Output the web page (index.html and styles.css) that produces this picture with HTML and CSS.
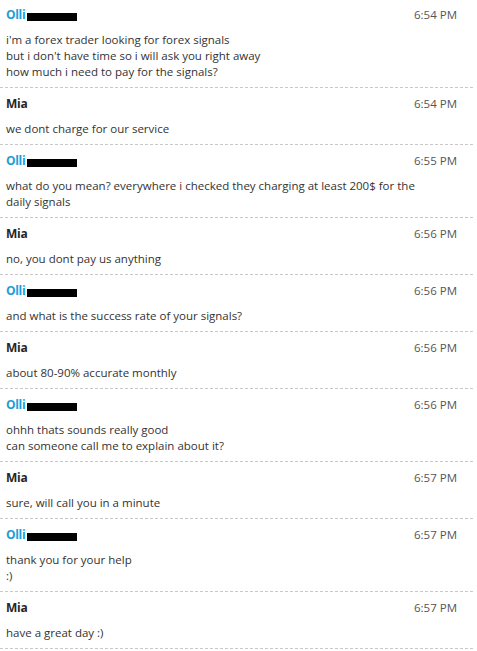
FILE: index.html
```html
<!DOCTYPE html>
<html>
<head>
<meta charset="utf-8">
<link rel="stylesheet" href="styles.css">
</head>
<body>
<div class="chat">
  <div class="msg">
    <div class="head"><span class="name olli">Olli <span class="redact"></span></span><span class="time">6:54 PM</span></div>
    <div class="text">i'm a forex trader looking for forex signals<br>but i don't have time so i will ask you right away<br>how much i need to pay for the signals?</div>
  </div>
  <div class="msg">
    <div class="head"><span class="name">Mia</span><span class="time">6:54 PM</span></div>
    <div class="text">we dont charge for our service</div>
  </div>
  <div class="msg">
    <div class="head"><span class="name olli">Olli <span class="redact"></span></span><span class="time">6:55 PM</span></div>
    <div class="text">what do you mean? everywhere i checked they charging at least 200$ for the<br>daily signals</div>
  </div>
  <div class="msg">
    <div class="head"><span class="name">Mia</span><span class="time">6:56 PM</span></div>
    <div class="text">no, you dont pay us anything</div>
  </div>
  <div class="msg">
    <div class="head"><span class="name olli">Olli <span class="redact"></span></span><span class="time">6:56 PM</span></div>
    <div class="text">and what is the success rate of your signals?</div>
  </div>
  <div class="msg">
    <div class="head"><span class="name">Mia</span><span class="time">6:56 PM</span></div>
    <div class="text">about 80-90% accurate monthly</div>
  </div>
  <div class="msg">
    <div class="head"><span class="name olli">Olli <span class="redact"></span></span><span class="time">6:56 PM</span></div>
    <div class="text">ohhh thats sounds really good<br>can someone call me to explain about it?</div>
  </div>
  <div class="msg">
    <div class="head"><span class="name">Mia</span><span class="time">6:57 PM</span></div>
    <div class="text">sure, will call you in a minute</div>
  </div>
  <div class="msg">
    <div class="head"><span class="name olli">Olli <span class="redact"></span></span><span class="time">6:57 PM</span></div>
    <div class="text">thank you for your help<br>:)</div>
  </div>
  <div class="msg">
    <div class="head"><span class="name">Mia</span><span class="time">6:57 PM</span></div>
    <div class="text">have a great day :)</div>
  </div>
</div>
</body>
</html>
```
FILE: styles.css
```css
html, body {
  margin: 0;
  padding: 0;
  background: #ffffff;
}
body {
  font-family: "Open Sans", "Noto Sans", sans-serif;
  font-size: 11.5px;
  color: #333333;
}
.chat {
  width: 473px;
  padding-top: 7px;
}
.msg {
  padding: 0 16px 8px 6px;
  margin-bottom: 8px;
  background-image: repeating-linear-gradient(to right, #c8c8c8 0 3px, transparent 3px 5px);
  background-size: 100% 1px;
  background-repeat: no-repeat;
  background-position: left bottom;
}
.head {
  display: flex;
  justify-content: space-between;
  align-items: center;
  height: 16px;
  line-height: 16px;
  margin-bottom: 9px;
}
.name {
  font-size: 12px;
  font-weight: bold;
  color: #262626;
  display: flex;
  align-items: center;
  letter-spacing: -0.3px;
}
.name.olli {
  color: #1a9fd9;
}
.redact {
  display: inline-block;
  width: 50px;
  height: 8px;
  background: #000;
  margin-left: 2px;
  margin-top: 3px;
}
.time {
  color: #555555;
}
.text {
  line-height: 16px;
}
```
